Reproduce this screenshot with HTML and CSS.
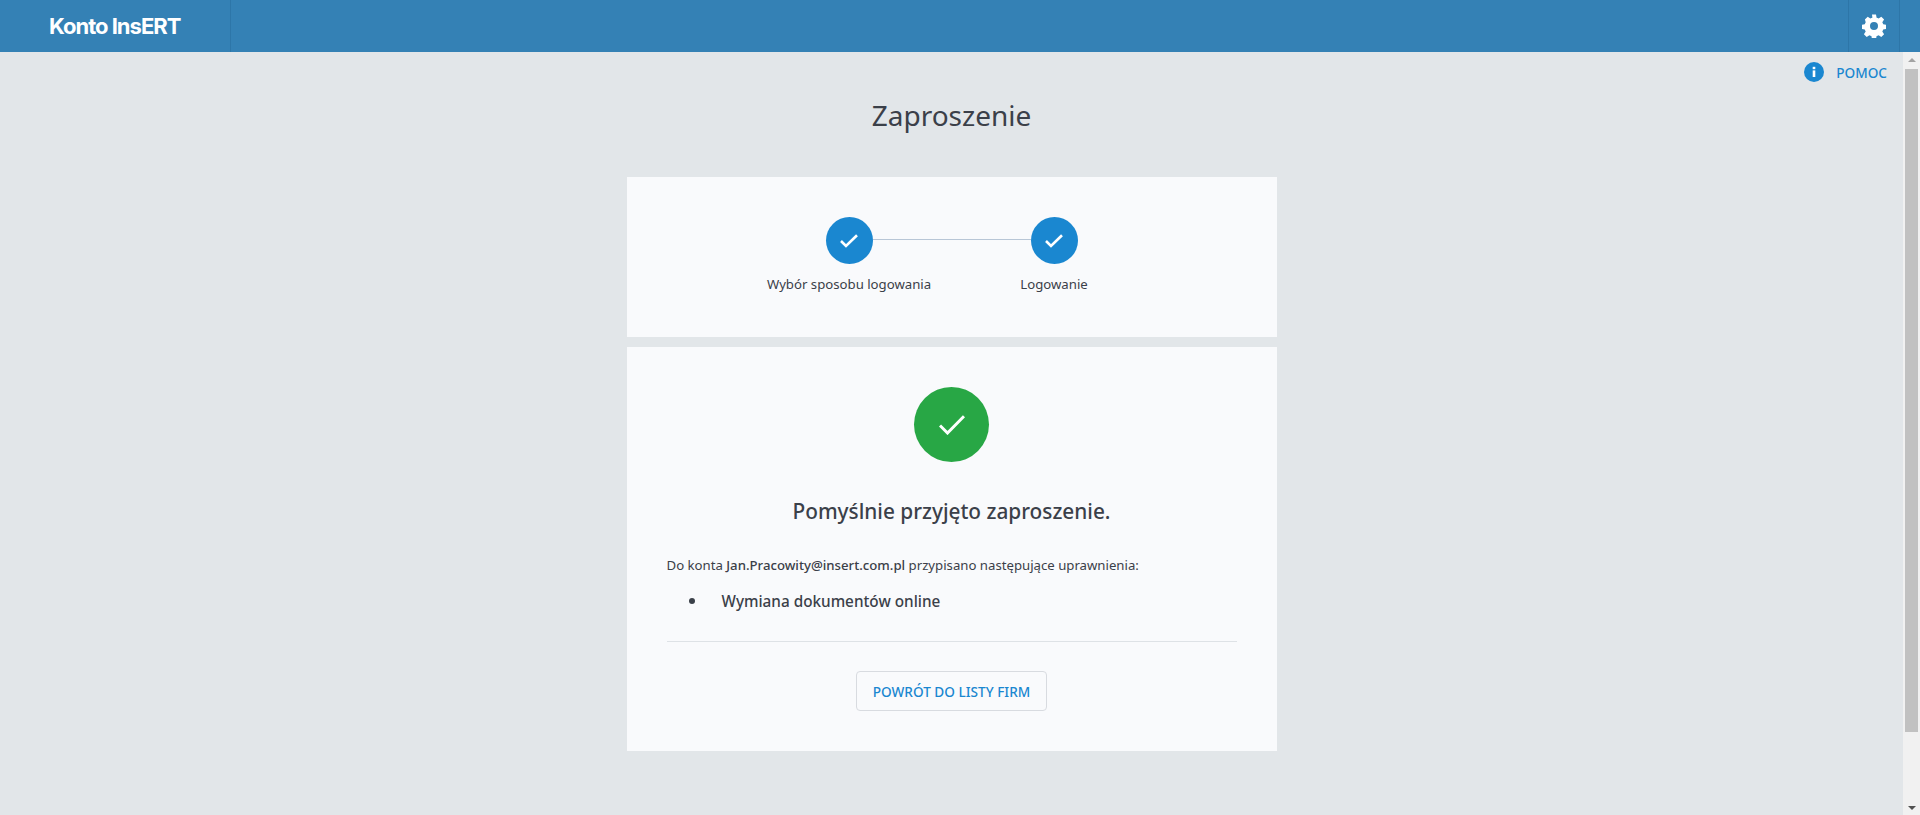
FILE: index.html
```html
<!DOCTYPE html>
<html lang="pl">
<head>
	<meta charset="UTF-8">
	<meta name="viewport" content="width=device-width, initial-scale=1.0">
	<title>Konto InsERT</title>
	<link rel="stylesheet" href="styles.css">
</head>
<body>
	<header class="topbar">
		<div class="brand">Konto InsERT</div>
		<div class="topbar-fill"></div>
		<button class="settings-btn" aria-label="Ustawienia">
			<svg viewBox="0 0 24 24" width="24" height="24"><path fill="#fff" fill-rule="evenodd" d="M10 .6h4l.6 3.1c.7.2 1.400.5 2 .9l2.700-1.800 2.800 2.800-1.800 2.700c.4.600.7 1.300.9 2l3.100.6v4l-3.100.6c-.2.700-.5 1.400-.9 2l1.800 2.700-2.800 2.800-2.700-1.800c-.6.400-1.300.7-2 .9l-.6 3.100h-4l-.6-3.100c-.7-.2-1.400-.5-2-.9l-2.700 1.800-2.800-2.800 1.800-2.700c-.4-.6-.7-1.300-.9-2l-3.100-.6v-4l3.100-.6c.2-.7.5-1.400.9-2L2.900 5.600l2.800-2.800 2.700 1.800c.6-.4 1.300-.7 2-.9zM12 8a4 4 0 1 0 0 8 4 4 0 0 0 0-8z"/></svg>
		</button>
		<div class="topbar-end"></div>
	</header>

	<div class="page">
		<main class="content">
			<div class="help-row">
				<a class="help-link" href="#">
					<svg viewBox="0 0 20 20" width="20" height="20"><circle cx="10" cy="10" r="10" fill="#1a87d0"/><rect x="8.700" y="8.400" width="2.600" height="6.600" fill="#fff"/><rect x="8.700" y="4.800" width="2.600" height="2.400" fill="#fff"/></svg>
					<span>POMOC</span>
				</a>
			</div>

			<h1 class="page-title">Zaproszenie</h1>

			<section class="card steps-card">
				<div class="steps">
					<div class="step">
						<div class="step-dot">
							<svg viewBox="0 0 18 14" width="18" height="14"><path d="M1 7l5 5L17 1.200" fill="none" stroke="#fff" stroke-width="2.600"/></svg>
						</div>
						<span class="step-label">Wybór sposobu logowania</span>
					</div>
					<div class="step-line"></div>
					<div class="step">
						<div class="step-dot">
							<svg viewBox="0 0 18 14" width="18" height="14"><path d="M1 7l5 5L17 1.200" fill="none" stroke="#fff" stroke-width="2.600"/></svg>
						</div>
						<span class="step-label">Logowanie</span>
					</div>
				</div>
			</section>

			<section class="card result-card">
				<div class="success-dot">
					<svg viewBox="0 0 26 20" width="26" height="20"><path d="M1 10.500l7.500 7.500L25 1.200" fill="none" stroke="#fff" stroke-width="3"/></svg>
				</div>
				<h2 class="result-title">Pomyślnie przyjęto zaproszenie.</h2>
				<p class="result-text">Do konta <strong>Jan.Pracowity@insert.com.pl</strong> przypisano następujące uprawnienia:</p>
				<ul class="perm-list">
					<li>Wymiana dokumentów online</li>
				</ul>
				<hr class="divider">
				<div class="actions">
					<button class="back-btn">POWRÓT DO LISTY FIRM</button>
				</div>
			</section>
		</main>

		<div class="scrollbar">
			<div class="arrow-up"></div>
			<div class="scroll-thumb"></div>
			<div class="arrow-down"></div>
		</div>
	</div>
</body>
</html>
```

FILE: styles.css
```css
* {
	box-sizing: border-box;
}

body {
	font-family: "Noto Sans", "Open Sans", sans-serif;
	background: #e2e6e9;
	color: #3b4049;
	margin: 0;
	padding: 0;
	height: 815px;
	overflow: hidden;
	display: flex;
	flex-direction: column;
}

.topbar {
	height: 52px;
	flex: none;
	background: #3481b5;
	display: flex;
	align-items: stretch;
}

.brand {
	width: 231px;
	padding-left: 49px;
	border-right: 1px solid #2d76a8;
	font-family: "Inter", sans-serif;
	font-weight: 700;
	font-size: 22px;
	line-height: 52px;
	letter-spacing: -1px;
	color: #fff;
}

.topbar-fill {
	flex: 1;
}

.settings-btn {
	width: 52px;
	padding: 0;
	background: none;
	border: 0;
	border-left: 1px solid #2d76a8;
	border-right: 1px solid #2d76a8;
	display: flex;
	align-items: center;
	justify-content: center;
}

.topbar-end {
	width: 20px;
}

.page {
	flex: 1;
	display: flex;
	min-height: 0;
}

.content {
	flex: 1;
	display: flex;
	flex-direction: column;
	align-items: center;
}

.help-row {
	align-self: stretch;
	display: flex;
	justify-content: flex-end;
	padding: 10px 16px 0 0;
}

.help-link {
	display: flex;
	align-items: center;
	gap: 12px;
	font-size: 13.600px;
	font-weight: 500;
	color: #1a87d0;
	text-decoration: none;
}

.page-title {
	margin: 13px 0 0;
	font-size: 28px;
	font-weight: 400;
	line-height: 40px;
}

.card {
	width: 650px;
	background: #f9fafc;
}

.steps-card {
	height: 160px;
	margin-top: 42px;
	padding-top: 40px;
}

.steps {
	display: flex;
	justify-content: center;
}

.step {
	width: 47px;
	display: flex;
	flex-direction: column;
	align-items: center;
	gap: 10px;
}

.step-dot {
	width: 47px;
	height: 47px;
	flex: none;
	border-radius: 50%;
	background: #1a87d0;
	display: flex;
	align-items: center;
	justify-content: center;
}

.step-line {
	width: 158px;
	height: 1px;
	margin-top: 22px;
	background: #b8c6d6;
}

.step-label {
	font-size: 13.200px;
	line-height: 20px;
	white-space: nowrap;
}

.result-card {
	margin-top: 10px;
	height: 404px;
	padding: 40px 40px 0;
	display: flex;
	flex-direction: column;
}

.success-dot {
	width: 75px;
	height: 75px;
	flex: none;
	align-self: center;
	border-radius: 50%;
	background: #28a745;
	display: flex;
	align-items: center;
	justify-content: center;
}

.result-title {
	margin: 34px 0 0;
	font-size: 20.800px;
	font-weight: 500;
	line-height: 30px;
	text-align: center;
}

.result-text {
	margin: 29px 0 0;
	font-size: 13.200px;
	line-height: 20px;
}

.result-text strong {
	font-weight: 500;
}

.perm-list {
	margin: 15px 0 0;
	padding: 0 0 0 22px;
	list-style: none;
	font-size: 15.300px;
	font-weight: 500;
	line-height: 22px;
}

.perm-list li {
	display: flex;
	align-items: center;
	gap: 27px;
}

.perm-list li::before {
	content: "";
	width: 6px;
	height: 6px;
	border-radius: 50%;
	background: #3b4049;
}

.divider {
	width: 100%;
	margin: 29px 0 0;
	border: 0;
	border-top: 1px solid #dee2e6;
}

.actions {
	display: flex;
	justify-content: center;
	margin-top: 29px;
}

.back-btn {
	width: 191px;
	height: 40px;
	padding: 0;
	font-family: inherit;
	font-size: 13.600px;
	font-weight: 500;
	color: #1a87d0;
	background: transparent;
	border: 1px solid #d8dbe0;
	border-radius: 4px;
}

.scrollbar {
	width: 17px;
	flex: none;
	background: #f1f1f1;
	display: flex;
	flex-direction: column;
	align-items: center;
	padding: 6px 0 5px;
}

.arrow-up {
	width: 0;
	height: 0;
	border: 4px solid transparent;
	border-top: 0;
	border-bottom: 4px solid #a3a3a3;
}

.scroll-thumb {
	width: 13px;
	height: 663px;
	margin-top: 7px;
	background: #c1c1c1;
}

.arrow-down {
	width: 0;
	height: 0;
	margin-top: auto;
	border: 4px solid transparent;
	border-bottom: 0;
	border-top: 4px solid #505050;
}
```
